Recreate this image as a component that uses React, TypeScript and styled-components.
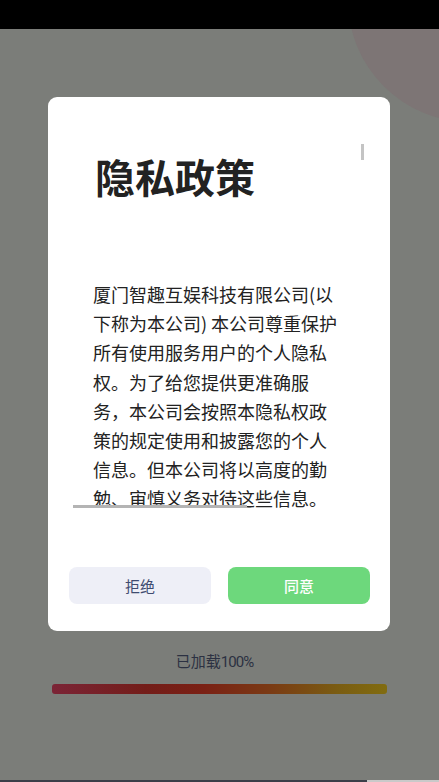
import React from "react";
import styled, { createGlobalStyle } from "styled-components";

const Global = createGlobalStyle`
  html, body { margin: 0; padding: 0; }
  body { font-family: "Noto Sans CJK SC", "Noto Sans", sans-serif; background: #7b7d79; }
  #root { height: 782px; }
`;

const Page = styled.div`
  width: 439px;
  height: 782px;
  display: flex;
  flex-direction: column;
  overflow: hidden;
`;

const StatusBar = styled.div`
  height: 29px;
  background: #000;
  flex: none;
`;

const Stage = styled.div`
  position: relative;
  flex: 1;
  background: #7b7d79;
  display: flex;
  flex-direction: column;
  align-items: center;
  overflow: hidden;
`;

const Blob = styled.div`
  position: absolute;
  width: 244px;
  height: 244px;
  border-radius: 50%;
  left: 348px;
  top: -151px;
  background: #7d7575;
`;

const Modal = styled.div`
  position: relative;
  margin-top: 68px;
  margin-right: 1px;
  width: 342px;
  height: 534px;
  box-sizing: border-box;
  background: #fff;
  border-radius: 9px;
  display: flex;
  flex-direction: column;
`;

const ScrollArea = styled.div`
  position: relative;
  margin: 0 23px 0 25px;
  height: 413px;
  overflow: hidden;
  flex: none;
`;

const Content = styled.div`
  padding: 55px 0 0 20px;
`;

const Title = styled.h1`
  margin: 0 0 80px 2px;
  font-size: 40px;
  line-height: 48px;
  font-weight: 700;
  color: #222;
`;

const Body = styled.p`
  margin: 0;
  font-size: 18px;
  line-height: 29.2px;
  color: #222;
  white-space: nowrap;
`;

const VBar = styled.div`
  position: absolute;
  right: 3px;
  top: 47px;
  width: 3px;
  height: 16px;
  background: #c4c4c4;
`;

const HBar = styled.div`
  position: absolute;
  left: 0;
  bottom: 2px;
  width: 174px;
  height: 3px;
  background: #b4b4b4;
`;

const Actions = styled.div`
  margin-top: 57px;
  padding: 0 20px 0 21px;
  display: flex;
  gap: 17px;
`;

const Button = styled.button<{ $primary?: boolean }>`
  flex: 1;
  height: 37px;
  border: none;
  border-radius: 8px;
  font-family: "Noto Sans CJK SC", sans-serif;
  font-size: 15px;
  padding: 0;
  background: ${(p) => (p.$primary ? "#6dd87c" : "#eeeff7")};
  color: ${(p) => (p.$primary ? "#ffffff" : "#3e4b70")};
  font-weight: ${(p) => (p.$primary ? 500 : 400)};
`;

const Loaded = styled.div`
  margin-top: 20px;
  margin-right: 10px;
  font-size: 15px;
  line-height: 20px;
  color: #2c3142;
`;

const Digits = styled.span`
  font-family: Roboto, "Noto Sans CJK SC", sans-serif;
  letter-spacing: -1px;
`;

const Progress = styled.div`
  margin-top: 12px;
  width: 335px;
  height: 10px;
  border-radius: 3px;
  background: linear-gradient(90deg, #7b2436 0%, #731d19 28%, #7a2014 45%, #7a3a14 65%, #7a5c12 85%, #816c10 100%);
`;

const BottomEdge = styled.div`
  flex: none;
  height: 2px;
  display: flex;
`;

const EdgePart = styled.div<{ $light?: boolean }>`
  flex: ${(p) => (p.$light ? "none" : 1)};
  width: ${(p) => (p.$light ? "72px" : "auto")};
  background: ${(p) => (p.$light ? "#c9c9c9" : "#3b3f49")};
`;

const lines = [
  "厦门智趣互娱科技有限公司(以",
  "下称为本公司) 本公司尊重保护",
  "所有使用服务用户的个人隐私",
  "权。为了给您提供更准确服",
  "务，本公司会按照本隐私权政",
  "策的规定使用和披露您的个人",
  "信息。但本公司将以高度的勤",
  "勉、审慎义务对待这些信息。",
];

export default function App() {
  return (
    <Page>
      <Global />
      <StatusBar />
      <Stage>
        <Blob />
        <Modal>
          <ScrollArea>
            <Content>
              <Title>隐私政策</Title>
              <Body>
                {lines.map((l, i) => (
                  <React.Fragment key={i}>
                    {l}
                    {i < lines.length - 1 && <br />}
                  </React.Fragment>
                ))}
              </Body>
            </Content>
            <VBar />
            <HBar />
          </ScrollArea>
          <Actions>
            <Button>拒绝</Button>
            <Button $primary>同意</Button>
          </Actions>
        </Modal>
        <Loaded>
          已加载<Digits>100%</Digits>
        </Loaded>
        <Progress />
      </Stage>
      <BottomEdge>
        <EdgePart />
        <EdgePart $light />
      </BottomEdge>
    </Page>
  );
}
